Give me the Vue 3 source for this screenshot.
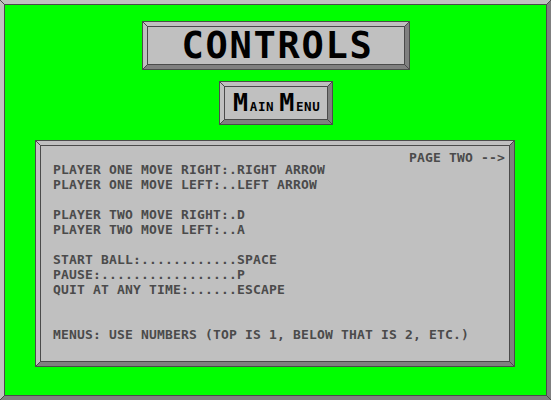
<script setup>
const corners = ['tl', 'tr', 'bl', 'br']
const steps = [0, 1, 2, 3, 4]
const lines = [
  'PLAYER ONE MOVE RIGHT:.RIGHT ARROW',
  'PLAYER ONE MOVE LEFT:..LEFT ARROW',
  '',
  'PLAYER TWO MOVE RIGHT:.D',
  'PLAYER TWO MOVE LEFT:..A',
  '',
  'START BALL:............SPACE',
  'PAUSE:.................P',
  'QUIT AT ANY TIME:......ESCAPE',
  '',
  '',
  'MENUS: USE NUMBERS (TOP IS 1, BELOW THAT IS 2, ETC.)',
]
</script>

<template>
  <main class="screen bevel">
    <svg v-for="c in corners" :key="c" class="corner" :class="c" width="5" height="5" viewBox="0 0 5 5">
      <rect v-for="s in steps" :key="s" :x="s" :y="s" width="1" height="1" />
    </svg>
    <div class="box title">
      <h1 class="bevel">
        <svg v-for="c in corners" :key="c" class="corner" :class="c" width="5" height="5" viewBox="0 0 5 5">
          <rect v-for="s in steps" :key="s" :x="s" :y="s" width="1" height="1" />
        </svg>
        <span class="face">CONTROLS</span>
      </h1>
    </div>
    <div class="box menu">
      <div class="bevel">
        <svg v-for="c in corners" :key="c" class="corner" :class="c" width="5" height="5" viewBox="0 0 5 5">
          <rect v-for="s in steps" :key="s" :x="s" :y="s" width="1" height="1" />
        </svg>
        <div class="face"><b>M</b><span class="ain">AIN</span><b>M</b><span>ENU</span></div>
      </div>
    </div>
    <section class="box panel">
      <div class="bevel">
        <svg v-for="c in corners" :key="c" class="corner" :class="c" width="5" height="5" viewBox="0 0 5 5">
          <rect v-for="s in steps" :key="s" :x="s" :y="s" width="1" height="1" />
        </svg>
        <div class="face">
          <div class="page">PAGE TWO --&gt;</div>
          <div v-for="(l, i) in lines" :key="i" class="line">{{ l }}</div>
        </div>
      </div>
    </section>
  </main>
</template>

<style>
body { margin: 0; overflow: hidden; }
</style>

<style scoped>
* { box-sizing: border-box; }
.screen {
  width: 551px;
  height: 400px;
  background: #00ff00;
  font-family: "DejaVu Sans Mono", monospace;
  font-weight: bold;
  display: flex;
  flex-direction: column;
  align-items: flex-start;
  padding-top: 17px;
  box-shadow: inset 0 0 0 1px #4b4b4b;
}
.bevel {
  position: relative;
  border: 4px solid;
  border-color: #c0c0c0 #808080 #808080 #c0c0c0;
}
.box { border: 1px solid #4b4b4b; flex: none; }
.box > .bevel { width: 100%; height: 100%; margin: 0; }
.face {
  width: 100%;
  height: 100%;
  border: 1px solid #4b4b4b;
  background: #c0c0c0;
  white-space: pre;
}
.corner { position: absolute; fill: #4b4b4b; shape-rendering: crispEdges; }
.tl { left: -4px; top: -4px; }
.tr { right: -4px; top: -4px; transform: scaleX(-1); }
.bl { left: -4px; bottom: -4px; transform: scaleY(-1); }
.br { right: -4px; bottom: -4px; }
.title { width: 268px; height: 49px; margin-left: 138px; }
.title .face {
  display: flex;
  justify-content: center;
  font-size: 37px;
  line-height: 38px;
  letter-spacing: 1.72px;
  padding-left: 3px;
}
.menu { width: 114px; height: 44px; margin: 11px 0 0 215px; }
.menu .face {
  display: flex;
  align-items: baseline;
  padding-left: 8px;
  font-size: 12.5px;
  line-height: 32px;
  letter-spacing: 0.6px;
}
.menu b { font-size: 25px; letter-spacing: 1.7px; }
.menu .ain { margin-right: 5px; }
.panel { width: 480px; height: 227px; margin: 15px 0 0 31px; }
.panel .face {
  padding: 4px 4px 0 12px;
  font-size: 13px;
  line-height: 15px;
  letter-spacing: 0.174px;
  color: #4b4b4b;
}
.page { height: 12px; text-align: right; }
.line { height: 15px; }
</style>
